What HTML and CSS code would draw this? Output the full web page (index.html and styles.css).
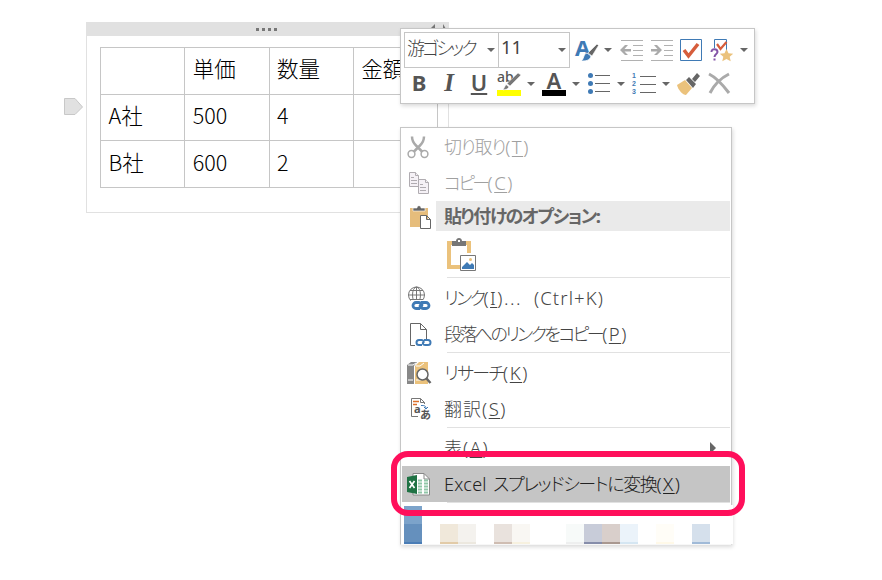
FILE: index.html
```
<!DOCTYPE html>
<html lang="ja">
<head>
    <meta charset="UTF-8">
    <meta name="viewport" content="width=device-width, initial-scale=1.0">
    <title>OneNote</title>
    <link rel="stylesheet" href="styles.css">
</head>
<body>
    <!-- ノートの表 -->
    <div class="note-area">
        <svg class="handle" width="20" height="18" viewBox="0 0 20 18"><path d="M.5.5h10.500L18.500 9 11 16.500H.5z" fill="#e1e1e1" stroke="#c8c8c8"/></svg>
        <div class="note">
            <div class="note-bar">
                <span class="dots"><i></i><i></i><i></i><i></i></span>
                <svg class="resize" width="16" height="8" viewBox="0 0 16 8"><path d="M0 5l4-4v5zM12 1l3 5h-3z" fill="#777"/></svg>
            </div>
            <table>
                <tr><td></td><td>単価</td><td>数量</td><td>金額</td></tr>
                <tr><td>A社</td><td>500</td><td>4</td><td></td></tr>
                <tr><td>B社</td><td>600</td><td>2</td><td></td></tr>
            </table>
        </div>
    </div>

    <!-- ミニツールバー -->
    <div class="toolbar">
        <div class="tool-row first">
            <div class="combo font-name"><span>游ゴシック</span><b class="caret"></b></div>
            <div class="combo font-size"><span>11</span><b class="caret"></b></div>
            <svg class="tool" viewBox="0 0 24 24">
                <text x="0" y="18" font-size="22" font-weight="bold" fill="#3f7ab5">A</text>
                <path d="M22 6l1.500 1.500L17 18l-4-3z" fill="#666" stroke="#fff" stroke-width=".6"/>
                <path d="M12 15l4 3c-1 5-6 5-10 5 3-1 2-7 6-8z" fill="#3f7ab5" stroke="#fff" stroke-width=".8"/>
            </svg>
            <b class="caret"></b>
            <svg class="tool" viewBox="0 0 24 24">
                <path d="M1 2.500h22M13 7.500h10M13 12.500h10M13 17.500h10M1 22.500h22" stroke="#b1b1b1"/>
                <path d="M0 12l5-5h3l-3.500 4H11v2.500H4.500L8 17H5z" fill="#aaa"/>
            </svg>
            <svg class="tool" viewBox="0 0 24 24">
                <path d="M1 2.500h22M14 7.500h9M14 12.500h9M14 17.500h9M1 22.500h22" stroke="#b1b1b1"/>
                <path d="M12 12L7 7H4l3.500 4H1v2.500h6.500L4 17h3z" fill="#aaa"/>
            </svg>
            <svg class="tool" viewBox="0 0 24 24">
                <path d="M.5 1.500h21v21H.5z" fill="#fff" stroke="#3f7ab5"/>
                <path d="M4 12l4.500 6L18 6" fill="none" stroke="#d65d3b" stroke-width="3.500"/>
            </svg>
            <svg class="tool" viewBox="0 0 24 24">
                <path d="M4.500 10V1.500h12V12" fill="none" stroke="#3f7ab5"/>
                <path d="M7 6l3.500 5 6-7" fill="none" stroke="#d65d3b" stroke-width="2.200"/>
                <path d="M1.500 14c0-4 6-3.500 6 0 0 2-3 2-3 5M4.500 20.500v2" fill="none" stroke="#8455a8" stroke-width="2"/>
                <path d="M16.500 11l2 4.200 4.700.5-3.500 3.100 1 4.500-4.200-2.300-4.200 2.300 1-4.500-3.500-3.100 4.700-.5z" fill="#ebc27c"/>
            </svg>
            <b class="caret"></b>
        </div>
        <div class="tool-row second">
            <span class="tool letter">B</span>
            <span class="tool letter italic">I</span>
            <span class="tool letter underline">U</span>
            <span class="tool marker">ab<svg viewBox="0 0 24 24"><path d="M21 1l3 2-11 11-3-2.500zM9 12.500l3 2.500-2 2-4 1z" fill="#777" stroke="#fff" stroke-width=".5"/></svg></span>
            <b class="caret"></b>
            <span class="tool letter color">A</span>
            <b class="caret"></b>
            <svg class="tool" viewBox="0 0 24 24">
                <path d="M8 3.500h15M8 11.500h15M8 19.500h15" stroke="#666"/>
                <g fill="#3f7ab5"><circle cx="3.500" cy="3.500" r="2.500"/><circle cx="3.500" cy="11.500" r="2.500"/><circle cx="3.500" cy="19.500" r="2.500"/></g>
            </svg>
            <b class="caret"></b>
            <span class="tool numbers"><i>1</i><i>2</i><i>3</i></span>
            <b class="caret"></b>
            <svg class="tool" viewBox="0 0 24 24">
                <path d="M0 13l8-5 7 8-6 7c-3 0-8-5-9-10z" fill="#ebc27c"/>
                <path d="M9 8l3-3 7 7-3 4zM15 7l5-6 3 3-5 6z" fill="#666"/>
            </svg>
            <svg class="tool" viewBox="0 0 24 24">
                <path d="M2 2c6 3 14 11 20 19M22 2C14 6 7 13 3 21" fill="none" stroke="#aaa" stroke-width="3"/>
            </svg>
        </div>
    </div>

    <!-- コンテキストメニュー -->
    <div class="menu">
        <div class="item disabled">
            <svg class="icon" viewBox="0 0 26 26">
                <path d="M6 2.500c0 4 2 7 4 9L16.500 18M18 2.500c0 4-2 7-4 9L7.500 18" fill="none" stroke="#aaa" stroke-width="2.500"/>
                <g fill="none" stroke="#aaa" stroke-width="1.500"><circle cx="5.500" cy="20" r="3.400"/><circle cx="18.500" cy="20" r="3.400"/></g>
            </svg>
            <span class="label"><span class="w-cut">切り取り</span>(<u>T</u>)</span>
        </div>
        <div class="item disabled">
            <svg class="icon" viewBox="0 0 26 26">
                <g fill="#f5f1f6" stroke="#b0acb1"><path d="M3.500 2.500h6l3 3v11h-9z"/><path d="M9.500 2.500v3h3M5 7.500h3M5 10.500h6M5 13.500h6"/><path d="M12.500 9.500h7l3 3v11h-10z"/><path d="M19.500 9.500v3h3M14 14.500h3M14 17.500h6M14 20.500h6"/></g>
            </svg>
            <span class="label"><span class="w-copy">コピー</span>(<u>C</u>)</span>
        </div>
        <div class="item heading">
            <svg class="icon" viewBox="0 0 26 26">
                <path d="M4 5h18v19H4z" fill="#e6bd7c"/>
                <path d="M7 8V5h4c0-3 4-3 4 0h4v3z" fill="#666" stroke="#fff" stroke-width=".6"/>
                <path d="M14.500 12.500h6l4 4v9h-10zM20.500 12.500v4h4" fill="#fff" stroke="#666"/>
            </svg>
            <span class="label"><span class="w-paste">貼り付けのオプション</span>:</span>
        </div>
        <div class="paste">
            <svg width="30" height="34" viewBox="0 0 30 34">
                <path d="M5 5H2v24h12M19 5h3v10" fill="none" stroke="#ebc27c" stroke-width="4"/>
                <path d="M5 8V3h4c0-4 6-4 6 0h4v5z" fill="#777"/><path d="M11 2h2v2h-2z" fill="#fff"/>
                <path d="M13.500 17.500h15v15h-15z" fill="#fff" stroke="#777"/>
                <path d="M15 30v-1l5-5 3 3 2-2 2 2v4H15z" fill="#3f7ab5"/><circle cx="23.500" cy="21.500" r="1.500" fill="#ebc27c"/>
            </svg>
        </div>
        <hr>
        <div class="item">
            <svg class="icon" viewBox="0 0 26 26">
                <g fill="none" stroke="#777"><circle cx="10.500" cy="10" r="8"/><ellipse cx="10.500" cy="10" rx="4" ry="8"/><path d="M10.500 2v16M2.500 10h16M4 5.500h13M4 14.500h13"/></g>
                <path d="M5 15h20v10H5z" fill="#fff"/>
                <g class="chain"><path d="M14 23.500h-4a3 3 0 0 1 0-6h3c3 0 4 3 1.500 4M15 17.500h5a3 3 0 0 1 0 6h-3c-3 0-4-3-1.500-4"/></g>
            </svg>
            <span class="label"><span class="w-link">リンク</span>(<u>I</u>)...<span class="key">(Ctrl+K)</span></span>
        </div>
        <div class="item">
            <svg class="icon" viewBox="0 0 26 26">
                <path d="M9 24.500H4.500v-22h10l6 6V18M14.500 2.500v6h6" fill="#fff" stroke="#666"/>
                <g class="chain thin"><path d="M16 24h-3a2.500 2.500 0 0 1 0-5h2.500c2 0 3 2 1.500 3M18 19h4a2.500 2.500 0 0 1 0 5h-3c-2 0-3-2-1.500-3"/></g>
            </svg>
            <span class="label"><span class="w-para">段落へのリンクをコピー</span>(<u>P</u>)</span>
        </div>
        <hr>
        <div class="item">
            <svg class="icon" viewBox="0 0 26 26">
                <path d="M1 5l4-3h6L8 6v18H1z" fill="#888"/><path d="M9 6l4-4h9v22H9z" fill="#ebc27c"/>
                <path d="M2 5h5l3-2M10 6h4l4-3M2 20h5M10 20h5" fill="none" stroke="#fff"/>
                <circle cx="16.500" cy="14.500" r="5.500" fill="#fff" stroke="#666" stroke-width="1.500"/><path d="M20.500 18.500l4 4.500" stroke="#666" stroke-width="2.500"/>
            </svg>
            <span class="label"><span class="w-research">リサーチ</span>(<u>K</u>)</span>
        </div>
        <div class="item">
            <svg class="icon" viewBox="0 0 26 26">
                <path d="M12 20.500H5.500v-18h9l4 4V8M14.500 2.500v4h4" fill="none" stroke="#777"/>
                <path d="M7 5.500h6M7 8.500h4" stroke="#dc6e28" stroke-width="1.300"/>
                <text x="8" y="17" font-size="11" font-weight="bold" fill="#555">a</text>
                <text x="14" y="22.500" font-size="11" font-weight="bold" fill="#555">あ</text>
                <path d="M15 9.500c3 0 5 0 5 3M18 11l2 2 2-2" fill="none" stroke="#3f7ab5"/>
            </svg>
            <span class="label"><span class="w-trans">翻訳</span>(<u>S</u>)</span>
        </div>
        <hr>
        <div class="item">
            <span class="icon"></span>
            <span class="label"><span class="w-table">表</span>(<u>A</u>)</span>
            <b class="submenu"></b>
        </div>
        <div class="item selected">
            <svg class="icon" viewBox="0 0 26 26">
                <path d="M7 2.500h11l5.500 5.500v16H7z" fill="#fff" stroke="#888"/><path d="M18 2.500V8h5.500" fill="none" stroke="#888"/>
                <path d="M12 9.500h4M18 9.500h4M12 12.500h4M18 12.500h4M12 15.500h4M18 15.500h4M12 18.500h4M18 18.500h4M12 21.500h4M18 21.500h4" stroke="#8fc6a7" stroke-width="2"/>
                <path d="M1 6l10-2v19L1 21z" fill="#1f7244"/><path d="M3.500 10l5 7M8.500 10l-5 7" stroke="#fff" stroke-width="1.700"/>
            </svg>
            <span class="label"><span class="latin">Excel</span> <span class="w-excel">スプレッドシートに変換</span>(<u>X</u>)</span>
        </div>
        <hr>
        <div class="mosaic">
            <div class="mosaic-icon"></div>
            <div class="mosaic-text">
                <i class="sand"></i><i class="cream"></i><i></i><i class="rose"></i><i class="ivory"></i><i></i><i></i><i class="mint"></i>
                <i class="slate"></i><i class="taupe"></i><i class="sky"></i><i></i><i class="lemon"></i><i></i><i class="blue"></i><i></i>
            </div>
        </div>
    </div>

    <!-- 強調枠 -->
    <div class="highlight"></div>
</body>
</html>
```
FILE: styles.css
```
/* 共通 */
* {
    box-sizing: border-box;
}

body {
    margin: 0;
    width: 882px;
    height: 580px;
    position: relative;
    overflow: hidden;
    background: #fff;
    font-family: "Noto Sans", "Noto Sans CJK JP", sans-serif;
}

svg {
    display: block;
    flex: none;
    overflow: visible;
}

i {
    font-style: normal;
}

/* ノートの表 */
.note-area {
    display: flex;
    padding: 22px 0 0 64px;
}

.handle {
    margin: 76px 2px 0 0;
}

.note {
    width: 363px;
    height: 191px;
    border: 1px solid #e1e1e1;
    border-top: none;
}

.note-bar {
    height: 14px;
    margin: 0 -1px;
    padding-right: 3px;
    background: #e1e1e1;
    display: flex;
    justify-content: center;
    align-items: center;
    position: relative;
}

.dots {
    display: flex;
    gap: 3px;
}

.dots i {
    width: 3px;
    height: 3px;
    background: #777;
}

.resize {
    position: absolute;
    right: 2px;
    top: 1px;
}

table {
    margin: 11px 0 0 13px;
    width: 338px;
    table-layout: fixed;
    border-collapse: collapse;
    font-family: "Noto Sans CJK JP", sans-serif;
    font-size: 21.5px;
    font-weight: 300;
    line-height: 30px;
    color: #000;
}

td {
    height: 46.700px;
    padding: 0 0 5px 7.500px;
    border: 1px solid #c6c6c6;
    white-space: nowrap;
}

/* ミニツールバー */
.toolbar {
    position: absolute;
    left: 400px;
    top: 28px;
    width: 355px;
    height: 76px;
    padding: 3px;
    background: #fff;
    border: 1px solid #c6c6c6;
    box-shadow: 1px 2px 4px rgba(0, 0, 0, 0.15);
}

.tool-row {
    display: flex;
    align-items: center;
    gap: 6px;
}

.first {
    height: 36px;
}

.first > svg {
    margin-left: -1px;
    margin-right: 1px;
}

.second {
    height: 32px;
    padding-left: 3px;
}

.tool {
    width: 24px;
    height: 24px;
    flex: none;
}

.caret {
    width: 15px;
    margin-left: -6px;
    display: flex;
    justify-content: center;
    flex: none;
}

.second .caret {
    padding-left: 4px;
}

.caret::before {
    content: '';
    border: 4px solid transparent;
    border-top-color: #666;
    border-bottom: none;
}

.first > .caret:last-child::before {
    margin-left: 3px;
}

.combo {
    height: 36px;
    border: 1px solid #c6c6c6;
    display: flex;
    align-items: center;
    justify-content: space-between;
    padding-left: 2px;
    font-size: 18.5px;
    line-height: 30px;
    color: #444;
    white-space: nowrap;
}

.combo span {
    margin-top: -7px;
}

.font-name {
    width: 95px;
}

.font-name span {
    font-size: 18px;
    font-family: "Noto Sans CJK JP", sans-serif;
    font-weight: 300;
    font-feature-settings: "palt";
    letter-spacing: -2.800px;
}

.font-size {
    width: 72px;
    margin-left: -7px;
}

.letter {
    font-size: 22px;
    line-height: 21px;
    font-weight: bold;
    text-align: center;
    color: #555;
}

.italic {
    font-family: "Liberation Serif", serif;
    font-style: italic;
    font-size: 25px;
}

.underline {
    font-weight: 600;
    text-decoration: underline;
    text-decoration-thickness: 2px;
    text-underline-offset: 2px;
}

.marker {
    position: relative;
    font-size: 14px;
    line-height: 9px;
    font-weight: 500;
    color: #555;
    border-bottom: 6px solid #ff0;
}

.marker svg {
    position: absolute;
    left: 0;
    top: 0;
    width: 24px;
    height: 24px;
}

.color {
    line-height: 17px;
    font-weight: 600;
    border-bottom: 6px solid #000;
}

.numbers {
    display: flex;
    flex-direction: column;
    font-family: "Liberation Sans", sans-serif;
    font-size: 7px;
    line-height: 8px;
    font-weight: bold;
    color: #3f7ab5;
}

.numbers i {
    height: 8px;
    display: flex;
    align-items: center;
    gap: 4px;
}

.numbers i::after {
    content: '';
    flex: 1;
    height: 1px;
    background: #666;
}

/* コンテキストメニュー */
.menu {
    position: absolute;
    left: 400px;
    top: 127px;
    width: 332px;
    height: 418px;
    padding: 1px;
    background: #fff;
    border: 1px solid #c6c6c6;
    border-bottom-color: #f7f7f7;
    box-shadow: 1px 2px 4px rgba(0, 0, 0, 0.15);
}

.item {
    height: 36px;
    padding-left: 4px;
    display: flex;
    align-items: center;
    color: #444;
}

.icon {
    width: 26px;
    height: 26px;
    flex: none;
}

.label {
    padding-left: 12px;
    font-size: 18.5px;
    line-height: 28px;
    font-weight: 300;
    letter-spacing: 1.500px;
    white-space: nowrap;
}

.label span:not(.key):not(.latin) {
    font-size: 18px;
    font-feature-settings: "palt";
}

.label u {
    text-decoration-thickness: 1px;
    text-underline-offset: 2px;
}

.disabled {
    color: #a0a0a0;
}

.heading {
    height: 30px;
    background: linear-gradient(to right, #fff 34px, #eaeaea 34px);
}

.heading .label {
    font-weight: bold;
    color: #666;
}

.paste {
    height: 46px;
    padding: 7px 0 0 45px;
}

hr {
    height: 1px;
    margin: 0 0 2px 45px;
    border: none;
    background: #e1e1e1;
}

.key {
    margin-left: 12px;
    letter-spacing: 1.100px;
}

/* ラベルごとの字詰め */
.w-cut, .w-copy, .w-research {
    letter-spacing: -1.700px;
}

.w-cut {
    letter-spacing: -1.200px;
}

.w-copy {
    letter-spacing: -2.700px;
}

.w-paste {
    letter-spacing: -1.500px;
}

.w-link {
    letter-spacing: -2.500px;
}

.w-para {
    letter-spacing: -2.600px;
}

.w-trans, .w-table {
    letter-spacing: 1px;
}

.w-excel {
    letter-spacing: -1.400px;
}

.latin {
    font-size: 18px;
    letter-spacing: 0.300px;
}

.chain {
    fill: none;
    stroke: #3f7ab5;
    stroke-width: 2.800px;
}

.thin {
    stroke-width: 2px;
}

.submenu {
    margin-left: auto;
    margin-right: 14px;
    border: 6px solid transparent;
    border-left-color: #666;
    border-right: none;
}

.selected {
    background: #c5c5c5;
    color: #222;
}

/* モザイク部分 */
.mosaic {
    display: flex;
    align-items: flex-end;
    gap: 18px;
    height: 39px;
    margin-right: -3px;
    padding-left: 2px;
    background: #fff;
}

.mosaic-icon {
    width: 18px;
    height: 38px;
    background: linear-gradient(#7ca3ca 18px, #6590bd 18px, #6590bd 36px, #4a7db6 36px);
}

.mosaic-text {
    display: flex;
}

.mosaic-text i {
    width: 18px;
    height: 20px;
    border-bottom: 2px solid transparent;
}

.mosaic-text .sand { background: #f0e8da; border-color: #e2cba8; }
.mosaic-text .cream { background: #f4f2ee; border-color: #ece8df; }
.mosaic-text .rose { background: #e9e2dd; border-color: #cfbdb2; }
.mosaic-text .ivory { background: #f9f7f3; border-color: #f7f1df; }
.mosaic-text .mint { background: #f7faf9; border-color: #eeefef; }
.mosaic-text .slate { background: #c8ccd9; border-color: #868daa; }
.mosaic-text .taupe { background: #d9cfcb; border-color: #a99890; }
.mosaic-text .sky { background: #ebf3fa; border-color: #d5e6f2; }
.mosaic-text .lemon { background: #fffdf7; border-color: #fff9e8; }
.mosaic-text .blue { background: #d5e0ec; border-color: #a0bad8; }

/* 強調枠 */
.highlight {
    position: absolute;
    left: 391px;
    top: 451px;
    width: 354px;
    height: 65px;
    border: 6px solid #ff0f5b;
    border-radius: 17px;
}
```
